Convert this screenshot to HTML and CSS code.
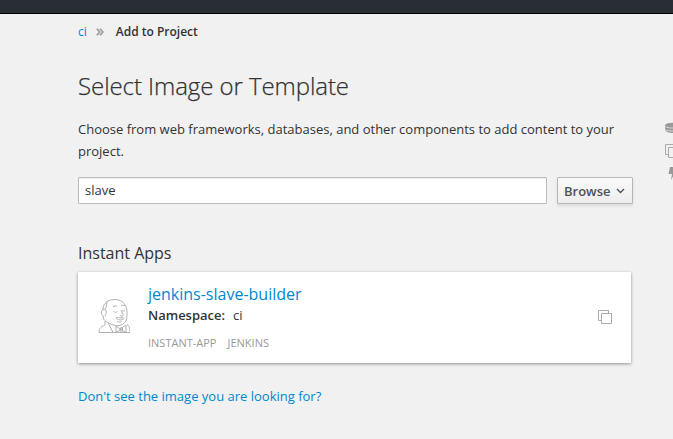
FILE: index.html
```html
<!DOCTYPE html>
<html lang="en">
<head>
<meta charset="utf-8">
<title>Add to Project</title>
<link rel="stylesheet" href="styles.css">
</head>
<body>
<header class="navbar"></header>
<div class="layout">
  <main class="content">
    <nav class="breadcrumb">
      <a href="#">ci</a>
      <svg class="separator" width="8" height="8" viewBox="0 0 8 8"><path d="M.8.8 3.8 4 .8 7.2M4 .8 7 4 4 7.2"/></svg>
      <strong>Add to Project</strong>
    </nav>
    <h1>Select Image or Template</h1>
    <p class="intro">Choose from web frameworks, databases, and other components to add content to your project.</p>
    <form class="search">
      <input class="keyword" type="text" value="slave" aria-label="Keyword">
      <button class="browse" type="button"><span>Browse</span><svg width="9" height="6" viewBox="0 0 9 6"><path d="M1 1 4.500 4.500 8 1"/></svg></button>
    </form>
    <h2>Instant Apps</h2>
    <article class="card">
      <svg class="jenkins" width="32" height="36" viewBox="0 0 32 36">
        <path d="M7 22.500C5 21 5 19 5.500 18 3 17.500 2.500 12 5 11.500 5 5 10 1.500 17 1.500c8 0 12.500 6 12 14 0 6-1 8-3 9.500-3 3-8 3.500-12 1.500-3-1-5.500-2.500-7-4zM9 4c-1 3 0 5-2 7.500M5 11.500c4-1 4 3 2 6.500"/>
        <path d="M15 9c1-1 3-1.500 4-.5M23 8c1-1 3-1 4 0M15.500 13.500c1.500 1 3 1 4 0M24 12.500c1 .8 2 .8 3 0M23 12c0 2 3 4 2 5.500-.5 1-2 .5-3 0M18 20c2-1 3-.5 4 0 1-.5 3-.5 4 .5-2 2-5 2-8-.500M19 23.500c1.500.8 3 .8 4.500 0"/>
        <path d="M7 23v4c-3 1-6 3-6 7.500h31c0-3 0-6-3-8M10 24.500l5 10M18 28l4 3 6-4v7.500l-5-3-5 3zM22 30h2.500v3H22z"/>
      </svg>
      <div class="details">
        <a class="name" href="#">jenkins-slave-builder</a>
        <div class="namespace"><strong>Namespace:</strong><span>ci</span></div>
        <div class="tags"><span>INSTANT-APP</span><span>JENKINS</span></div>
      </div>
      <svg class="copy" width="14" height="14" viewBox="0 0 14 14"><path d="M3.500 10.500h-3V.5h10v3M3.500 3.500h10v10h-10z"/></svg>
    </article>
    <a class="help" href="#">Don't see the image you are looking for?</a>
  </main>
  <aside class="side">
    <svg width="14" height="12" viewBox="0 0 14 12"><path class="solid" d="M0 3C2 0 12 0 14 3v5c-2 4-12 4-14 0z"/><path class="gap" d="M0 4.500c3 2 11 2 14 0M0 7.500c3 2 11 2 14 0"/></svg>
    <svg class="copy" width="14" height="14" viewBox="0 0 14 14"><path d="M3.500 10.500h-3V.5h10v3M3.500 3.500h10v10h-10z"/></svg>
    <svg class="bolt" width="8" height="13" viewBox="0 0 8 13"><path class="solid" d="M2 0h4L5 4h3L3 13l1-6H.5z"/></svg>
  </aside>
</div>
</body>
</html>
```
FILE: styles.css
```css
* { box-sizing: border-box; }
body {
  margin: 0;
  height: 439px;
  overflow: hidden;
  background: #f1f1f1;
  color: #333;
  font: 13px/22px "Open Sans", sans-serif;
}
a { color: #0088ce; text-decoration: none; }
svg { flex: none; fill: none; stroke: #aaa; }
.navbar { height: 14px; background: #292e34; border-bottom: 1px solid #030303; }
.layout { display: flex; padding-left: 78px; }
.content { flex: none; width: 555px; }
.breadcrumb { display: flex; align-items: center; height: 20px; margin-top: 8px; font-size: 12px; }
.separator { margin: 0 12px 0 9px; stroke: #999; stroke-width: 1.6; }
.breadcrumb strong, .namespace strong { font-weight: 600; }
h1 {
  margin: 27px 0 0;
  font-size: 24px;
  line-height: 34px;
  font-weight: 300;
  letter-spacing: -.07px;
  -webkit-text-stroke: .25px #333;
}
.intro { margin: 15px 0 0; }
.search { display: flex; gap: 10px; margin-top: 15px; }
.keyword {
  flex: none;
  width: 469px;
  height: 27px;
  padding: 0 6px 1px;
  border: 1px solid #bbb;
  border-radius: 1px;
  background: #fff;
  color: #333;
  font: inherit;
  box-shadow: inset 0 1px 1px rgba(0, 0, 0, .075);
}
.browse {
  display: flex;
  align-items: center;
  gap: 5px;
  width: 76px;
  height: 27px;
  padding: 1px 6px 0;
  border: 1px solid #b7b7b7;
  border-radius: 1px;
  background: linear-gradient(#fafafa, #ededed);
  box-shadow: 0 2px 3px rgba(3, 3, 3, .1);
  color: #4d5258;
  font: 600 13px/22px "Open Sans", sans-serif;
}
.browse svg { stroke: #4d5258; stroke-width: 1.4; }
h2 { margin: 37px 0 0; font-size: 16px; line-height: 24px; font-weight: 400; }
.card {
  display: flex;
  align-items: center;
  width: 553px;
  height: 91px;
  margin-top: 7px;
  padding: 0 19px 0 20px;
  background: #fff;
  box-shadow: 0 1px 3px rgba(0, 0, 0, .4);
}
.jenkins { margin-top: -4px; stroke: #b0b0b0; }
.details { flex: 1; margin: 1px 0 0 18px; }
.name { display: block; font-size: 16px; line-height: 22px; }
.namespace { display: flex; gap: 8px; line-height: 20px; }
.tags { display: flex; gap: 11px; margin-top: 8px; color: #999; font-size: 11px; line-height: 20px; }
.card .copy { margin-top: -1px; }
.help { display: block; margin-top: 22px; }
.side { display: flex; flex: 1; flex-direction: column; gap: 10px; min-width: 0; padding: 108px 0 0 32px; overflow: hidden; }
.side .solid { fill: #999; stroke: none; }
.side .gap { stroke: #f1f1f1; stroke-width: .7; }
.bolt { margin: -1px 0 0 3px; }
```
